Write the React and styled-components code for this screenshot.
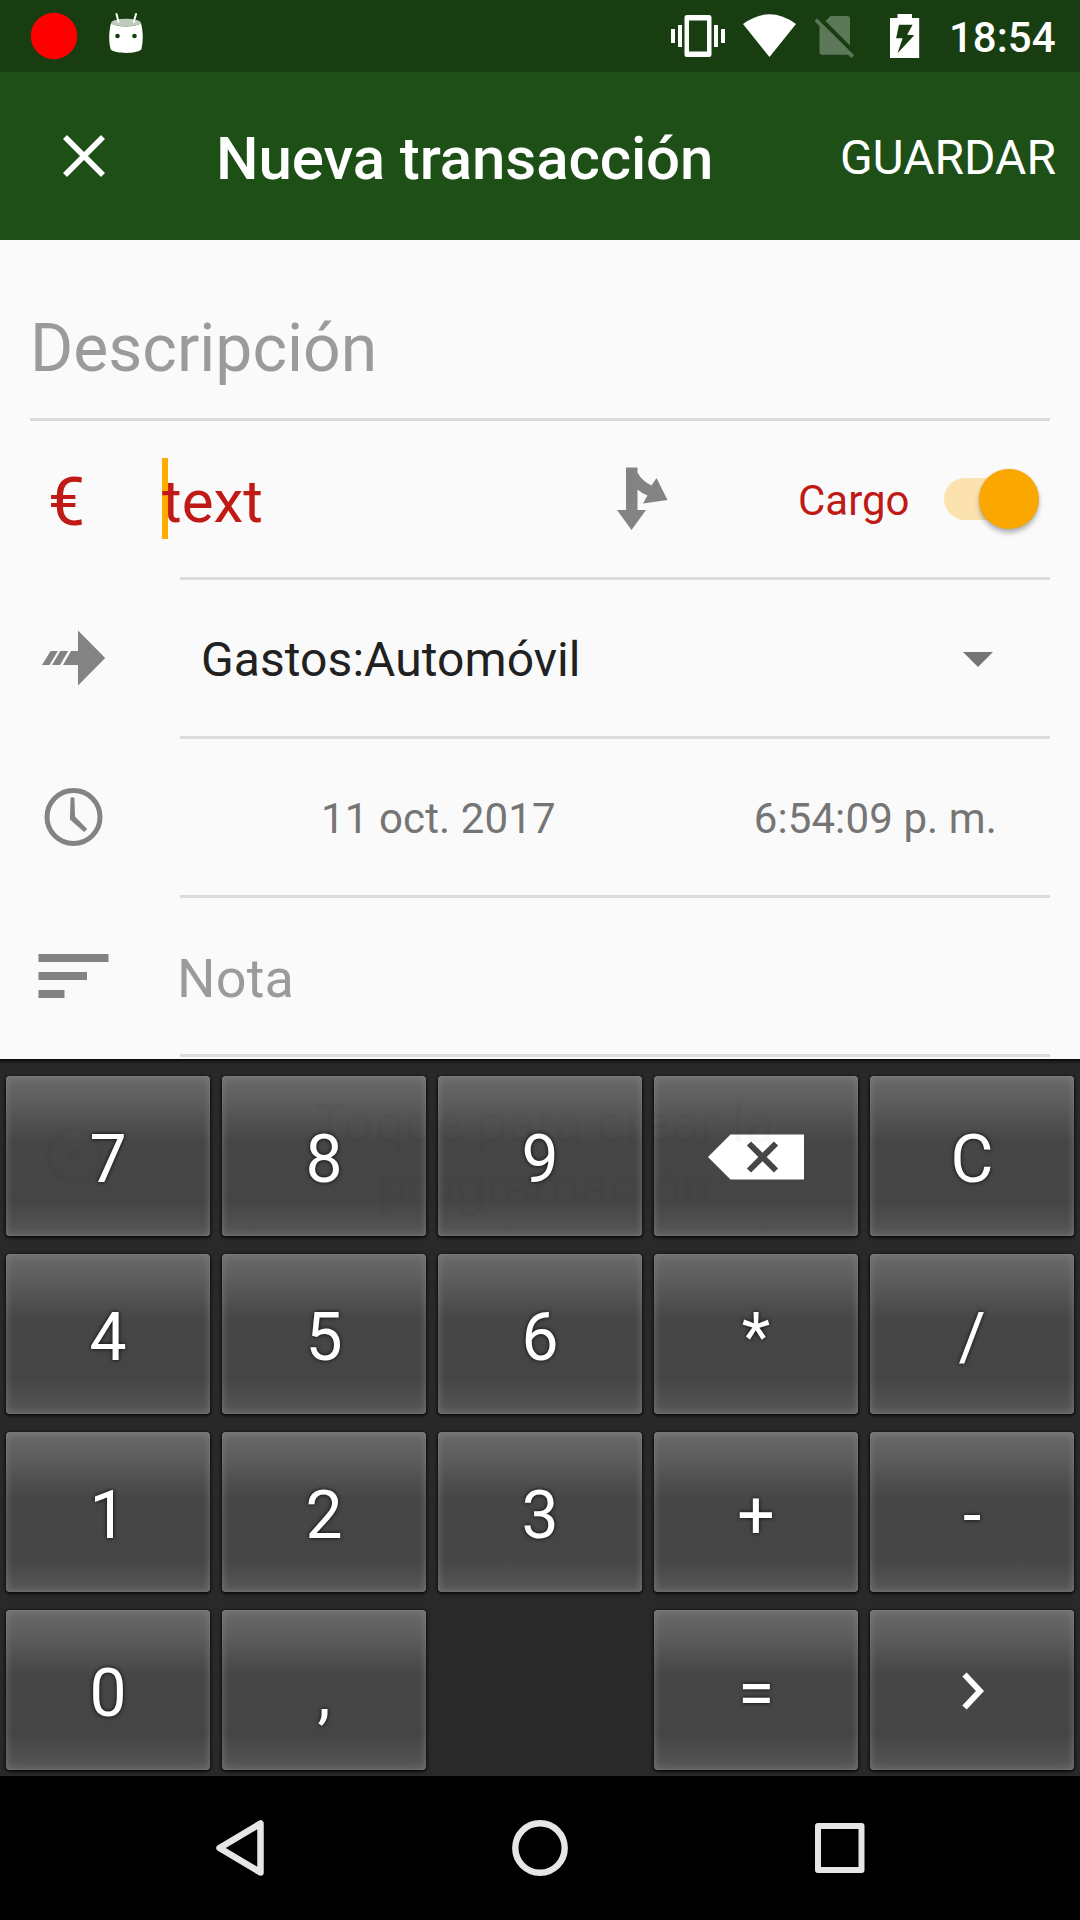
import React from "react";
import styled, { createGlobalStyle, css } from "styled-components";

const Global = createGlobalStyle`
  * { box-sizing: border-box; }
  body { margin: 0; background: #000; font-family: Roboto, "Noto Sans", sans-serif; }
  svg { display: block; flex: none; }
`;

const Screen = styled.div`
  width: 1080px;
  height: 1920px;
  display: flex;
  flex-direction: column;
  overflow: hidden;
`;

const StatusBar = styled.header`
  height: 72px;
  flex: none;
  display: flex;
  justify-content: space-between;
  background: #173d11;
`;

const Clock = styled.span`
  width: 146px;
  padding-left: 15px;
  font-size: 42px;
  font-weight: 500;
  line-height: 76px;
  color: #fff;
`;

const StatusGroup = styled.div`
  display: flex;
`;

const Toolbar = styled.div`
  height: 168px;
  flex: none;
  display: flex;
  align-items: center;
  padding: 0 24px 0 60px;
  background: #1d4f16;
  color: #fff;
`;

const Title = styled.h1`
  flex: 1;
  margin: 0 0 0 108px;
  font-size: 60px;
  font-weight: 500;
  line-height: 72px;
  letter-spacing: -0.08px;
  padding-top: 5px;
  white-space: nowrap;
`;

const SaveButton = styled.button`
  border: 0;
  padding: 4px 0 0;
  background: none;
  color: #fff;
  font: 400 48px/56px Roboto, sans-serif;
`;

const Form = styled.main`
  height: 819px;
  flex: none;
  display: flex;
  flex-direction: column;
  padding: 0 30px;
  background: #fafafa;
`;

const DescriptionField = styled.div`
  height: 181px;
  flex: none;
  padding: 70px 0 0 0;
  border-bottom: 3px solid #dbdbdb;
  font-size: 66px;
  line-height: 78px;
  color: #9b9b9b;
`;

const Row = styled.div`
  height: 159px;
  flex: none;
  display: flex;
`;

const RowIcon = styled.div`
  width: 150px;
  display: flex;
  align-items: center;
  padding-bottom: 3px;
`;

const RowBody = styled.div`
  flex: 1;
  display: flex;
  align-items: center;
  border-bottom: 3px solid #dbdbdb;
`;

const Currency = styled.span`
  padding: 7px 0 0 18px;
  font-size: 66px;
  color: #c01a16;
`;

const Amount = styled.span`
  width: 454px;
  margin: 0 0 2px -18px;
  padding-top: 6px;
  font-size: 60px;
  line-height: 75px;
  color: #c01a16;
  background: linear-gradient(#ffab00, #ffab00) 0 0 / 6px 81px no-repeat;
`;

const TypeLabel = styled.span`
  width: 146px;
  margin-left: 130px;
  padding-top: 3px;
  font-size: 42px;
  color: #c01a16;
`;

const Track = styled.div`
  width: 90px;
  height: 42px;
  display: flex;
  align-items: center;
  justify-content: flex-end;
  border-radius: 21px;
  background: #fce2ae;
`;

const Thumb = styled.div`
  width: 60px;
  height: 60px;
  flex: none;
  margin-right: -5px;
  border-radius: 50%;
  background: #faa700;
  box-shadow: 0 4px 5px rgba(0, 0, 0, 0.28), 0 0 2px rgba(0, 0, 0, 0.12);
`;

const Account = styled.span`
  flex: 1;
  padding: 3px 0 0 21px;
  font-size: 48px;
  letter-spacing: 0.07px;
  color: #212121;
`;

const Moment = styled.span`
  padding-top: 3px;
  font-size: 42px;
  letter-spacing: 0.12px;
  color: #757575;
  white-space: nowrap;
  margin-left: ${(p) => p.$gap}px;
`;

const Note = styled.span`
  margin-left: -3px;
  padding-top: 4px;
  font-size: 54px;
  letter-spacing: 0.2px;
  color: #9b9b9b;
`;

const Keyboard = styled.section`
  position: relative;
  height: 717px;
  flex: none;
  display: grid;
  grid-template-columns: repeat(5, 204px);
  grid-template-rows: repeat(4, 160px);
  gap: 18px 12px;
  padding: 17px 6px 0;
  background: linear-gradient(#050505 0, #1e1e1e 3px, #292929 6px);
`;

const CoveredRow = styled.div`
  position: absolute;
  top: 33px;
  left: 0;
  right: 0;
  display: flex;
  align-items: center;
  padding-left: 44px;
  opacity: 0.018;
  pointer-events: none;
`;

const CoveredLabel = styled.span`
  width: 540px;
  margin-left: 170px;
  font-size: 54px;
  line-height: 63px;
  text-align: center;
  color: #000;
`;

const keyFace = css`
  background: linear-gradient(#6a6a6a 0, #5c5c5c 17%, #464646 41%, #454545 78%, #575757 100%);
  box-shadow: inset 0 0 9px rgba(160, 160, 160, 0.45), inset 0 0 2px rgba(160, 160, 160, 0.25),
    0 1px 3px 1px rgba(0, 0, 0, 0.75);
`;

const Key = styled.button`
  display: flex;
  align-items: center;
  justify-content: center;
  border: 0;
  border-radius: 4px;
  padding: 7px 0 0;
  color: #fff;
  font: 400 66px/78px Roboto, sans-serif;
  text-shadow: 0 0 4px rgba(0, 0, 0, 0.9);
  ${(p) => !p.$blank && keyFace}
  ${(p) => p.$blank && "background: none;"}
  ${(p) => p.$icon && "padding: 2px 0 0;"}
`;

const NavBar = styled.nav`
  height: 144px;
  flex: none;
  display: flex;
  justify-content: space-between;
  padding: 0 180px;
  align-items: center;
  background: #000;
`;

const NotificationIcons = () => (
  <svg width="160" height="72" viewBox="0 0 160 72">
    <circle cx="54" cy="36" r="23.2" fill="#f00" />
    <path d="M111 23C116 27.500 136 27.500 141 23C143.300 32 143.300 42 141.300 49.500C137 54 115 54 110.700 49.500C108.700 42 108.700 32 111 23z" fill="#fff" />
    <ellipse cx="126" cy="22.600" rx="14.800" ry="3.800" fill="#c0cbbe" />
    <path d="M116.500 14l2 8M136 14l-2.200 8" stroke="#fff" strokeWidth="2" strokeLinecap="round" />
    <circle cx="117.500" cy="36" r="2.300" fill="#173d11" />
    <circle cx="134.500" cy="36" r="2.300" fill="#173d11" />
  </svg>
);

const SystemIcons = () => (
  <svg width="270" height="72" viewBox="664 0 270 72">
    <g fill="#fff">
      <path fillRule="evenodd" d="M687 15h22a2.500 2.500 0 0 1 2.500 2.500v37a2.500 2.500 0 0 1-2.500 2.500h-22a2.500 2.500 0 0 1-2.500-2.500v-37a2.500 2.500 0 0 1 2.500-2.500zM689 20.500v31h18v-31z" />
      <path d="M678 25h4v22h-4zM671 29h4v14h-4zM714 25h4v22h-4zM721 29h4v14h-4z" />
      <path d="M743 24Q769.500 4.500 796 24L769.500 57z" />
      <path fillRule="evenodd" d="M897.500 14h14.500v4h7.200v40H890V18h7.500zM899 24.700L896.100 38.300h6.500L897.500 53.300 914.300 35.300 907.100 34.700 912.600 24.700z" />
    </g>
    <g fill="#fff" opacity="0.3">
      <path d="M825.500 21L830.500 16H847a3 3 0 0 1 3 3V45.500z" />
      <path d="M817 18.500L854 55 851.500 58 848 54.800H822a2.500 2.500 0 0 1-2.500-2.500V26L814.500 21z" />
    </g>
  </svg>
);

const CloseIcon = () => (
  <svg width="48" height="48" viewBox="0 0 48 48">
    <path d="M5 5L43 43M43 5L5 43" stroke="#fff" strokeWidth="5.600" />
  </svg>
);

const SplitIcon = () => (
  <svg width="52" height="64" viewBox="616 467 52 64" fill="#838383">
    <path d="M626 467.500h11.500v5Q642 481 651.500 485.500L656.500 478 667.500 500 643 503.500 647.500 495.500Q642 493.500 637.500 489.500V510H646L631.500 530 617 510H626z" />
  </svg>
);

const TransferIcon = () => (
  <svg width="76" height="60" viewBox="30 628 76 60" fill="#838383">
    <path d="M50.600 651h7.300l-8.500 14H42zM60.300 651h7.900l-8.200 14h-8zM71 651h7v-20.500L105.200 658 78 685.500V665H63z" />
  </svg>
);

const ClockIcon = () => (
  <svg width="76" height="60" viewBox="30 787 76 60">
    <circle cx="73.500" cy="817" r="26.500" fill="none" stroke="#838383" strokeWidth="5" />
    <path d="M70.600 797.500h3.800l.6 19L87.200 829 84.200 832 69.900 819.500z" fill="#838383" />
  </svg>
);

const NoteIcon = () => (
  <svg width="80" height="60" viewBox="30 946 80 60" fill="#838383">
    <path d="M38.500 954h70v8h-70zM38.500 972h48.500v8h-48.500zM38.500 990h26v8h-26z" />
  </svg>
);

const DropArrow = () => (
  <svg width="87" height="20" viewBox="963 648 87 20">
    <path d="M963 652h30L978 667z" fill="#757575" />
  </svg>
);

const RepeatIcon = () => (
  <svg width="60" height="60" viewBox="0 0 60 60">
    <circle cx="30" cy="30" r="26" fill="none" stroke="#000" strokeWidth="5" />
    <circle cx="30" cy="30" r="7" fill="#000" />
  </svg>
);

const DeleteIcon = () => (
  <svg width="96" height="46" viewBox="0 0 96 46">
    <path d="M0 23L22.500.5H96V45.500H22.500z" fill="#fff" />
    <path d="M41 9.500L68 36.500M68 9.500L41 36.500" stroke="#464646" strokeWidth="6" />
  </svg>
);

const NextIcon = () => (
  <svg width="24" height="38" viewBox="0 0 24 38">
    <path d="M4.500 2.500L20 19 4.500 35.500" fill="none" stroke="#fff" strokeWidth="6" />
  </svg>
);

const keys = [
  "7", "8", "9", "delete", "C",
  "4", "5", "6", "*", "/",
  "1", "2", "3", "+", "-",
  "0", ",", "", "=", "next",
];
const keyIcons = { delete: <DeleteIcon />, next: <NextIcon /> };

export default function App() {
  return (
    <Screen>
      <Global />
      <StatusBar>
        <NotificationIcons />
        <StatusGroup>
          <SystemIcons />
          <Clock>18:54</Clock>
        </StatusGroup>
      </StatusBar>
      <Toolbar>
        <CloseIcon />
        <Title>Nueva transacción</Title>
        <SaveButton>GUARDAR</SaveButton>
      </Toolbar>
      <Form>
        <DescriptionField>Descripción</DescriptionField>
        <Row>
          <RowIcon><Currency>€</Currency></RowIcon>
          <RowBody>
            <Amount>text</Amount>
            <SplitIcon />
            <TypeLabel>Cargo</TypeLabel>
            <Track><Thumb /></Track>
          </RowBody>
        </Row>
        <Row>
          <RowIcon><TransferIcon /></RowIcon>
          <RowBody>
            <Account>Gastos:Automóvil</Account>
            <DropArrow />
          </RowBody>
        </Row>
        <Row>
          <RowIcon><ClockIcon /></RowIcon>
          <RowBody>
            <Moment $gap={141}>11 oct. 2017</Moment>
            <Moment $gap={198}>6:54:09 p. m.</Moment>
          </RowBody>
        </Row>
        <Row>
          <RowIcon><NoteIcon /></RowIcon>
          <RowBody><Note>Nota</Note></RowBody>
        </Row>
      </Form>
      <Keyboard>
        {keys.map((k, i) => (
          <Key key={i} $blank={!k} $icon={k in keyIcons}>{keyIcons[k] || k}</Key>
        ))}
        <CoveredRow>
          <RepeatIcon />
          <CoveredLabel>Toque para crear la programación</CoveredLabel>
        </CoveredRow>
      </Keyboard>
      <NavBar>
        <svg width="120" height="60" viewBox="180 1818 120 60">
          <path d="M219.500 1848L260.500 1823.500V1872.500z" fill="none" stroke="#e6e6e6" strokeWidth="6.500" strokeLinejoin="round" />
        </svg>
        <svg width="60" height="60" viewBox="510 1818 60 60">
          <circle cx="540" cy="1848" r="24.700" fill="none" stroke="#e6e6e6" strokeWidth="6.400" />
        </svg>
        <svg width="120" height="60" viewBox="780 1818 120 60">
          <rect x="818" y="1826" width="43.500" height="44" fill="none" stroke="#e6e6e6" strokeWidth="6" strokeLinejoin="round" />
        </svg>
      </NavBar>
    </Screen>
  );
}
